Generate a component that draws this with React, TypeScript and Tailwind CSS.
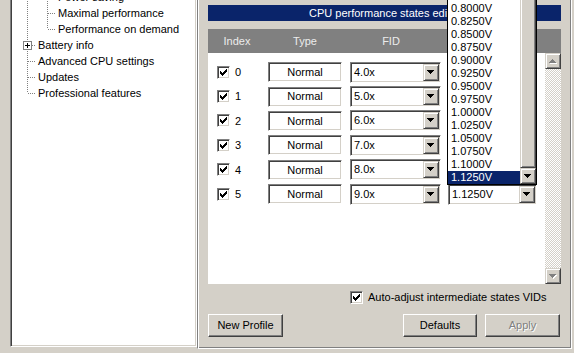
import React from "react";

const font = "font-['Liberation_Sans',Arial,sans-serif]";
const sunken =
  "border border-t-[#808080] border-l-[#808080] border-r-white border-b-white shadow-[inset_1px_1px_0_#404040,inset_-1px_-1px_0_#d4d0c8]";
const raised =
  "border border-t-[#d4d0c8] border-l-[#d4d0c8] border-r-[#404040] border-b-[#404040] shadow-[inset_1px_1px_0_#fff,inset_-1px_-1px_0_#808080]";
const pushBtn =
  "border border-t-white border-l-white border-r-[#404040] border-b-[#404040] shadow-[inset_-1px_-1px_0_#808080] bg-[#d4d0c8]";

const rows = [
  { idx: 0, fid: "4.0x" },
  { idx: 1, fid: "5.0x" },
  { idx: 2, fid: "6.0x" },
  { idx: 3, fid: "7.0x" },
  { idx: 4, fid: "8.0x" },
  { idx: 5, fid: "9.0x" },
];

const vids = [
  "0.8000V", "0.8250V", "0.8500V", "0.8750V", "0.9000V", "0.9250V", "0.9500V",
  "0.9750V", "1.0000V", "1.0250V", "1.0500V", "1.0750V", "1.1000V", "1.1250V",
];

function CheckBox() {
  return (
    <span className={`flex h-[13px] w-[13px] shrink-0 bg-white ${sunken}`}>
      <svg width="11" height="11" viewBox="0 0 11 11" shapeRendering="crispEdges">
        {[2, 3, 4, 3, 2, 1, 0].map((t, i) => (
          <rect key={i} x={2 + i} y={2 + t} width="1" height="3" fill="#000" />
        ))}
      </svg>
    </span>
  );
}

function Arrow({ up = false, disabled = false }: { up?: boolean; disabled?: boolean }) {
  const bars = [7, 5, 3, 1];
  const rects = (dx: number, dy: number, fill: string) =>
    bars.map((w, i) => (
      <rect
        key={fill + i}
        x={dx + (7 - w) / 2}
        y={dy + (up ? 3 - i : i)}
        width={w}
        height="1"
        fill={fill}
      />
    ));
  return (
    <svg width="8" height="5" viewBox="0 0 8 5" shapeRendering="crispEdges">
      {disabled && rects(1, 1, "#fff")}
      {rects(0, 0, disabled ? "#808080" : "#000")}
    </svg>
  );
}

function Combo({ value, w }: { value: string; w: string }) {
  return (
    <div className={`flex h-[21px] ${w} bg-white p-[1px] ${sunken}`}>
      <span className="flex-1 pl-[2px] leading-[17px]">{value}</span>
      <span className={`flex h-[17px] w-[16px] items-center justify-center bg-[#d4d0c8] ${raised}`}>
        <Arrow />
      </span>
    </div>
  );
}

function TreeLines() {
  const dot = { stroke: "#808080", strokeDasharray: "1 1", strokeWidth: 1 };
  return (
    <svg className="pointer-events-none absolute left-0 top-0" width="60" height="120" shapeRendering="crispEdges">
      <line x1="15.5" y1="0" x2="15.5" y2="104" {...dot} />
      {[56, 72, 88, 104].map((y) => (
        <line key={y} x1="16" y1={y + 0.5} x2="24" y2={y + 0.5} {...dot} />
      ))}
      <line x1="35.5" y1="0" x2="35.5" y2="40" {...dot} />
      {[8, 24, 40].map((y) => (
        <line key={y} x1="36" y1={y + 0.5} x2="44" y2={y + 0.5} {...dot} />
      ))}
      <rect x="11.5" y="52.5" width="8" height="8" fill="#fff" stroke="#808080" />
      <rect x="13" y="56" width="5" height="1" fill="#000" />
      <rect x="15" y="54" width="1" height="5" fill="#000" />
    </svg>
  );
}

const tree = [
  { label: "Power saving", level: 2 },
  { label: "Maximal performance", level: 2 },
  { label: "Performance on demand", level: 2 },
  { label: "Battery info", level: 1 },
  { label: "Advanced CPU settings", level: 1 },
  { label: "Updates", level: 1 },
  { label: "Professional features", level: 1 },
];

export default function App() {
  return (
    <div className={`${font} relative flex h-[353px] w-[574px] overflow-hidden bg-[#d4d0c8] text-[11px] text-black`}>
      {/* tree pane */}
      <div className="flex w-[197px] shrink-0 flex-col pb-[6px] pl-[10px]">
        <div className={`-mt-[4px] flex-1 overflow-hidden bg-white p-[1px] ${sunken}`}>
          <div className="relative -mt-[9px]">
            <TreeLines />
            {tree.map((t) => (
              <div
                key={t.label}
                className={`h-[16px] leading-[16px] whitespace-nowrap ${t.level === 2 ? "pl-[46px]" : "pl-[26px]"}`}
              >
                {t.label}
              </div>
            ))}
          </div>
        </div>
      </div>

      {/* editor pane */}
      <div className="mb-[4px] flex w-[375px] shrink-0 flex-col border-b border-l border-r border-b-white border-l-[#808080] border-r-white px-[10px] pb-[11px] pt-[5px] shadow-[inset_1px_0_0_#fff,inset_-1px_-1px_0_#808080]">
        <div className="h-[16px] bg-[#0a246a] text-center leading-[16px] text-white whitespace-nowrap">
          CPU performance states editor
        </div>

        <div className="mt-[8px] flex h-[255px] flex-col">
          <div className="flex h-[24px] shrink-0 items-center bg-[#808080] text-[#ececec]">
            <span className="w-[58px] text-center">Index</span>
            <span className="w-[78px] text-center">Type</span>
            <span className="w-[94px] text-center">FID</span>
          </div>
          <div className="flex flex-1">
            <div className="flex-1 bg-white pt-[7px]">
              {rows.map((r) => (
                <div key={r.idx} className="flex h-[24.4px] items-center">
                  <div className="flex w-[58px] items-center gap-[5px] pl-[9px]">
                    <CheckBox />
                    <span>{r.idx}</span>
                  </div>
                  <div className="flex w-[78px] justify-center">
                    <div className={`flex h-[20px] w-[74px] items-center justify-center bg-white ${sunken}`}>Normal</div>
                  </div>
                  <div className="w-[98px] pl-[6px]">
                    <Combo value={r.fid} w="w-[91px]" />
                  </div>
                  {r.idx === 5 && (
                    <div className="pl-[6px]">
                      <Combo value="1.1250V" w="w-[89px]" />
                    </div>
                  )}
                </div>
              ))}
            </div>
            <div className="flex w-[16px] flex-col">
              <span className={`flex h-[16px] items-center justify-center bg-[#d4d0c8] ${raised}`}>
                <Arrow up disabled />
              </span>
              <div className="flex-1 bg-[repeating-conic-gradient(#d4d0c8_0_25%,#fff_0_50%)] bg-[length:2px_2px]" />
              <span className={`flex h-[16px] items-center justify-center bg-[#d4d0c8] ${raised}`}>
                <Arrow disabled />
              </span>
            </div>
          </div>
        </div>

        <div className="mt-[7px] flex h-[13px] items-center gap-[5px] pl-[142px]">
          <CheckBox />
          <span className="whitespace-nowrap">Auto-adjust intermediate states VIDs</span>
        </div>

        <div className="mt-[10px] flex h-[23px] pr-[1px]">
          <button className={`w-[75px] ${pushBtn}`}>New Profile</button>
          <button className={`ml-auto w-[74px] ${pushBtn}`}>Defaults</button>
          <button className={`ml-[8px] w-[75px] text-[#808080] [text-shadow:1px_1px_0_#fff] ${pushBtn}`}>Apply</button>
        </div>
      </div>

      {/* open VID drop-down list */}
      <div className="absolute left-[447px] top-[-25px] flex h-[210px] w-[90px] border border-black bg-white">
        <div className="flex w-[72px] flex-col justify-end overflow-hidden">
          {vids.map((v) => (
            <div
              key={v}
              className={`h-[13px] shrink-0 pl-[3px] leading-[13px] ${v === "1.1250V" ? "bg-[#0a246a] text-white" : ""}`}
            >
              {v}
            </div>
          ))}
        </div>
        <div className="flex w-[16px] flex-col">
          <div className={`flex-1 bg-[#d4d0c8] ${raised}`} />
          <span className={`flex h-[16px] items-center justify-center bg-[#d4d0c8] ${raised}`}>
            <Arrow />
          </span>
        </div>
      </div>
    </div>
  );
}
